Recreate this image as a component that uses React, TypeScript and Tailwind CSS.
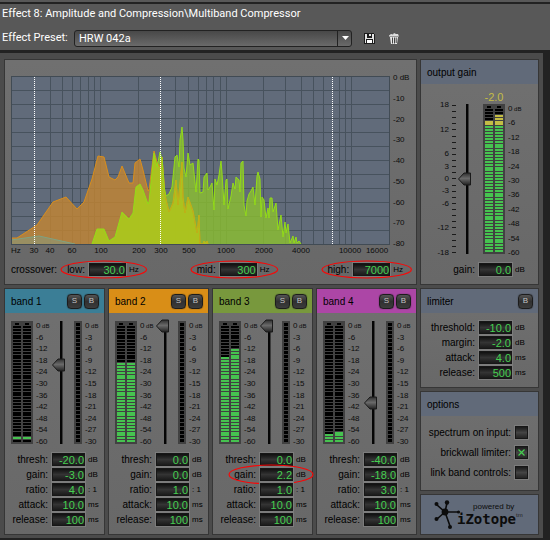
import { useId, useState } from "react";

type Band = {
  name: string;
  header: string;
  left: number;
  right: number;
  skip: number;
  thresh: string;
  gain: string;
  ratio: string;
  attack: string;
  release: string;
  marked?: boolean;
};

const bands: Band[] = [
  { name: "band 1", header: "bg-[#3b7e96]", left: 1, right: 1, skip: 1, thresh: "-20.0", gain: "-3.0", ratio: "4.0", attack: "10.0", release: "100" },
  { name: "band 2", header: "bg-[#d98e17]", left: 28, right: 28, skip: 0, thresh: "0.0", gain: "0.0", ratio: "1.0", attack: "10.0", release: "100" },
  { name: "band 3", header: "bg-[#78983d]", left: 30, right: 33, skip: 0, thresh: "0.0", gain: "2.2", ratio: "1.0", attack: "10.0", release: "100", marked: true },
  { name: "band 4", header: "bg-[#ac46a6]", left: 3, right: 4, skip: 0, thresh: "-40.0", gain: "-18.0", ratio: "3.0", attack: "10.0", release: "100" },
];

const levelScale = ["0", "-6", "-12", "-18", "-24", "-30", "-36", "-42", "-48", "-54", "-60"];
const reductionScale = ["0", "-3", "-6", "-9", "-12", "-15", "-18", "-21", "-24", "-27", "-30"];
const gainScale = ["18", "", "12", "", "6", "3", "0", "-3", "-6", "", "-12", "", "-18"];
const dbScale = ["0 dB", "-10", "-20", "-30", "-40", "-50", "-60", "-70", "-80"];

const gridX = [39, 51, 61, 69, 77, 83, 89, 127, 164, 177, 187, 195, 202, 209, 215, 252, 274, 290, 302, 312, 328, 334, 340];
const gridY = [14, 28, 42, 56, 70, 84, 98, 112, 126, 140, 154];
const crossovers = [23, 149, 321];

const freqLabels: [number, string][] = [
  [23, "30"], [39, "40"], [61, "60"], [90, "100"], [128, "200"], [150, "300"], [178, "500"],
  [215, "1000"], [253, "2000"], [290, "4000"], [339, "10000"], [366, "16000"],
];

const lowLine = "0,164 28,160 64,168";

const midLowLine =
  "0,162 6,162 26,149 42,126 55,121 66,133 73,126 81,103 87,80 93,81 98,101 104,104 107,101 111,90 118,107 122,107 " +
  "124,87 129,83 132,94 137,115 138,114 143,75 146,86 149,91 151,81 154,119 158,136 162,127 165,104 167,129 171,86 " +
  "172,121 174,137 177,121 182,135 186,157 188,139 189,168 192,168 193,165 195,167 196,165 197,168";

const midHighLine =
  "81,168 86,153 93,153 98,165 104,161 111,136 118,143 122,137 125,111 129,108 132,114 137,128 138,126 143,77 146,91 " +
  "149,76 151,84 153,111 155,120 158,118 161,111 164,81 166,79 168,91 169,64 171,51 172,64 173,92 175,101 177,77 " +
  "179,89 182,87 185,116 187,83 188,84 189,117 192,116 193,101 196,97 197,114 199,111 201,107 203,134 204,103 " +
  "206,109 208,99 210,85 211,97 213,129 215,104 216,103 217,133 220,120 222,107 224,113 225,101 228,104 229,116 " +
  "230,87 232,85 233,129 235,140 236,125 238,118 240,115 242,111 244,129 246,100 247,96 249,103 250,141 251,121 " +
  "253,124 255,142 257,132 258,142 259,122 261,122 262,136 265,127 267,154 270,139 272,161 274,146 275,157 277,148 " +
  "279,167 282,160 283,167 285,161 286,167 288,165 290,168";

function Header({ title, color, buttons = [] }: { title: string; color: string; buttons?: string[] }) {
  return (
    <div className={`flex h-6 items-center gap-0.5 pl-1.5 pr-[5px] ${color}`}>
      <h2 className="flex-1 text-[10px]">{title}</h2>
      {buttons.map((label) => (
        <button
          key={label}
          className="flex size-[15px] items-center justify-center rounded-[4px] border border-[#1c1c1c] bg-linear-to-b from-[#555] via-[#303030] to-[#3c3c3c] text-[8px] text-[#c4c4c4] shadow-[0_0_1px_#222]"
        >
          {label}
        </button>
      ))}
    </div>
  );
}

function Panel({ children, className = "" }: { children: React.ReactNode; className?: string }) {
  return (
    <section className={`border border-[#363636] bg-linear-to-b from-[#707070] to-[#686868] ${className}`}>
      {children}
    </section>
  );
}

function Ellipse() {
  return (
    <svg className="pointer-events-none absolute inset-0 size-full overflow-visible">
      <ellipse cx="50%" cy="50%" rx="50%" ry="50%" fill="none" stroke="#f80808" strokeWidth="1.2" />
    </svg>
  );
}

function ValueBox({ id, initial }: { id: string; initial: string }) {
  const [value, setValue] = useState(initial);

  return (
    <input
      id={id}
      value={value}
      onChange={(e) => setValue(e.target.value)}
      className="h-[13px] w-full min-w-0 border border-[#161616] bg-linear-to-b from-[#101010] via-[#343434] to-[#1a1a1a] text-right text-[11px] leading-[11px] text-[#45cf50] shadow-[0_0_0_1px_#7c7c7c]"
    />
  );
}

function Field({ label, value, unit, wide = false, marked = false }: { label: string; value: string; unit: string; wide?: boolean; marked?: boolean }) {
  const id = useId();

  return (
    <div className={`relative grid h-[13px] items-center ${wide ? "grid-cols-[1fr_33px_26px]" : "grid-cols-[1fr_33px_19px]"}`}>
      <label htmlFor={id} className="pr-1 text-right text-[10px] leading-3">{label}</label>
      <ValueBox id={id} initial={value} />
      <span className="pl-[3px] text-[8px]">{unit}</span>
      {marked && (
        <div className="absolute -inset-y-[3px] left-4 -right-px">
          <Ellipse />
        </div>
      )}
    </div>
  );
}

function Scale({ labels, className = "" }: { labels: string[]; className?: string }) {
  return (
    <div className={`flex flex-col justify-between text-[8px] leading-[11px] text-[#0c0c0c] ${className}`}>
      {labels.map((label, i) => (
        <span key={i} className="h-[11px] whitespace-nowrap">
          {label}
          {i === 0 && label === "0" && <span className="text-[6px]"> dB</span>}
        </span>
      ))}
    </div>
  );
}

function Meter({ height, count, levels, skip = 0, hot = [0, 0] }: { height: number; count: number; levels: number[]; skip?: number; hot?: number[] }) {
  const pitch = (height - 6) / count;

  function colorOf(channel: number, fromBottom: number) {
    if (fromBottom < skip) return "#000";
    if (fromBottom < levels[channel] + skip) return "#46c350";
    if (fromBottom < levels[channel] + hot[channel]) return "#c4bd45";
    return "#000";
  }

  return (
    <svg width="22" height={height} className="bg-[#414141]" shapeRendering="crispEdges">
      {[2, 12].map((x, channel) => (
        <g key={x}>
          <rect x={x + 2} y="2" width="4" height="2" fill="#000" />
          {Array.from({ length: count }, (_, i) => (
            <rect key={i} x={x} y={Math.round(height - 2 - (i + 1) * pitch) + 1} width="8" height="2" fill={colorOf(channel, i)} />
          ))}
        </g>
      ))}
    </svg>
  );
}

function ReductionMeter() {
  return (
    <svg width="8" height="123" className="mt-px bg-[#414141]" shapeRendering="crispEdges">
      {Array.from({ length: 30 }, (_, i) => (
        <rect key={i} x="2" y={2 + i * 4} width="4" height="3" fill="#000" />
      ))}
    </svg>
  );
}

function Slider({ label, initial, min, max, height, inset }: { label: string; initial: number; min: number; max: number; height: number; inset: number }) {
  const [value, setValue] = useState(initial);
  const id = useId();
  const y = Math.round(inset + ((max - value) / (max - min)) * (height - inset - 2));

  return (
    <div className="relative">
      <svg width="13" height={height} className="overflow-visible">
        <defs>
          <linearGradient id={id} x1="0" y1="0" x2="0" y2="1">
            <stop offset="0" stopColor="#2e2e2e" />
            <stop offset="0.45" stopColor="#6a6a6a" />
            <stop offset="1" stopColor="#222" />
          </linearGradient>
        </defs>
        <rect x="8" y="0" width="3" height={height} fill="#3c3c3c" />
        <rect x="8" y="0" width="2" height={height} fill="#050505" />
        <path d={`M0.5 ${y} L6 ${y - 6} H12.5 V${y + 6} H6 Z`} fill={`url(#${id})`} stroke="#1a1a1a" />
      </svg>
      <input
        type="range"
        aria-label={label}
        min={min}
        max={max}
        value={value}
        onChange={(e) => setValue(Number(e.target.value))}
        className="absolute inset-0 size-full opacity-0 [direction:rtl] [writing-mode:vertical-lr]"
      />
    </div>
  );
}

function Spectrum() {
  return (
    <svg viewBox="0 0 379 182" className="mt-1 block w-full">
      <defs>
        <clipPath id="mid-low-area">
          <polygon points={`0,168 ${midLowLine}`} />
        </clipPath>
        <clipPath id="right-side">
          <rect x="150" y="0" width="229" height="168" />
        </clipPath>
      </defs>
      <rect x="0" y="0" width="379" height="169" fill="#616b7a" />
      <g stroke="#47525d" shapeRendering="crispEdges">
        {gridX.map((x) => (
          <line key={x} x1={x + 0.5} x2={x + 0.5} y1="0" y2="168" />
        ))}
        {gridY.map((y) => (
          <line key={y} x1="0" x2="379" y1={y + 0.5} y2={y + 0.5} />
        ))}
      </g>
      <g fillOpacity="0.8">
        <polygon points={`0,168 ${midLowLine}`} fill="#c48632" />
        <polygon points={`${lowLine} 0,168`} fill="#94926a" />
        <polygon points={midHighLine} fill="#8cc030" />
        <polygon points={midHighLine} fill="#b2c51a" clipPath="url(#mid-low-area)" />
      </g>
      <g fill="none">
        <polyline points={lowLine} stroke="#7fa282" />
        <polyline points={midLowLine} stroke="#d98e1c" />
        <polyline points={midLowLine} stroke="#b9b818" clipPath="url(#right-side)" />
        <polyline points={midHighLine} stroke="#93dc17" />
      </g>
      <g stroke="#fff" strokeDasharray="1 1" shapeRendering="crispEdges">
        {crossovers.map((x) => (
          <line key={x} x1={x + 0.5} x2={x + 0.5} y1="1" y2="168" />
        ))}
      </g>
      <rect x="0.5" y="0.5" width="378" height="168" fill="none" stroke="#414b54" />
      <g fontSize="8" fill="#0c0c0c">
        <text x="0" y="177">Hz</text>
        {freqLabels.map(([x, label]) => (
          <text key={label} x={x} y="177" textAnchor="middle">{label}</text>
        ))}
      </g>
    </svg>
  );
}

function Crossover({ label, value }: { label: string; value: string }) {
  const id = useId();

  return (
    <div className="relative flex h-[13px] items-center pl-1.5 pr-2">
      <label htmlFor={id} className="mr-1 text-[10px] leading-3">{label}</label>
      <div className="flex w-[37px]">
        <ValueBox id={id} initial={value} />
      </div>
      <span className="ml-[3px] text-[8px]">Hz</span>
      <div className="absolute inset-x-0 -inset-y-0.5">
        <Ellipse />
      </div>
    </div>
  );
}

function BandPanel({ band }: { band: Band }) {
  return (
    <Panel className="pb-2">
      <Header title={band.name} color={band.header} buttons={["S", "B"]} />
      <div className="mt-[7px] flex h-[127px] items-start pl-1.5">
        <div className="mt-px flex">
          <Meter height={123} count={41} levels={[band.left, band.right]} skip={band.skip} />
        </div>
        <Scale labels={levelScale} className="ml-[3px] h-full w-4" />
        <div className="mt-px">
          <Slider label={`${band.name} threshold`} initial={Number(band.thresh)} min={-60} max={0} height={123} inset={5} />
        </div>
        <div className="ml-[9px] flex">
          <ReductionMeter />
        </div>
        <Scale labels={reductionScale} className="ml-[3px] h-full" />
      </div>
      <div className="mt-1.5 flex flex-col gap-0.5">
        <Field label="thresh:" value={band.thresh} unit="dB" />
        <Field label="gain:" value={band.gain} unit="dB" marked={band.marked} />
        <Field label="ratio:" value={band.ratio} unit=": 1" />
        <Field label="attack:" value={band.attack} unit="ms" />
        <Field label="release:" value={band.release} unit="ms" />
      </div>
    </Panel>
  );
}

function OutputGain() {
  return (
    <Panel className="pb-2">
      <Header title="output gain" color="bg-[#616a79]" />
      <div className="mt-1.5 flex items-start pl-3">
        <Scale labels={gainScale} className="mt-[9px] h-[159px] w-4 text-right" />
        <svg width="4" height="150" className="ml-[3px] mt-3.5" shapeRendering="crispEdges">
          {Array.from({ length: 25 }, (_, i) => (
            <rect key={i} x="0" y={Math.round(i * 6.12) + 1} width="4" height="1" fill="#1a1a1a" />
          ))}
        </svg>
        <div className="ml-0.5 mt-3.5">
          <Slider label="output gain" initial={0} min={-18} max={18} height={150} inset={1} />
        </div>
        <div className="ml-3 flex flex-col items-center">
          <output className="text-[11px] leading-[14px] text-[#c4bd45]">-2.0</output>
          <Meter height={150} count={50} levels={[44, 44]} hot={[2, 4]} />
        </div>
        <Scale labels={levelScale} className="ml-[3px] mt-[13px] h-[155px]" />
      </div>
      <div className="mt-[5px]">
        <Field label="gain:" value="0.0" unit="dB" wide />
      </div>
    </Panel>
  );
}

function Option({ label, initial = false }: { label: string; initial?: boolean }) {
  const [checked, setChecked] = useState(initial);

  return (
    <label className="flex h-[13px] items-center justify-end gap-1 text-[10px] leading-3">
      {label}
      <span className="relative flex">
        <input
          type="checkbox"
          checked={checked}
          onChange={(e) => setChecked(e.target.checked)}
          className="size-[13px] appearance-none border border-[#161616] bg-linear-to-b from-[#1a1a1a] via-[#444] to-[#242424] shadow-[0_0_0_1px_#7c7c7c]"
        />
        {checked && (
          <svg viewBox="0 0 13 13" className="pointer-events-none absolute inset-0">
            <path d="M3.5 3.5 L9.5 9.5 M9.5 3.5 L3.5 9.5" stroke="#45cf50" strokeWidth="1.2" />
          </svg>
        )}
      </span>
    </label>
  );
}

function Logo() {
  return (
    <section className="flex h-[41px] items-center border border-[#363636] bg-[#616a79] pl-3">
      <svg width="28" height="31" viewBox="0 0 28 31" stroke="#0c0c0c" strokeWidth="1.6" fill="#0c0c0c">
        <path d="M12 13 L14 4 M12 13 L4 6 M12 13 L4 20 M12 13 L17 27 M12 13 L26 13" fill="none" />
        <g stroke="none">
          <circle cx="12" cy="13" r="3.4" />
          <circle cx="14" cy="3.5" r="2.2" />
          <circle cx="3.5" cy="5" r="2" />
          <circle cx="3.5" cy="20" r="2" />
          <circle cx="17" cy="28" r="2" />
          <circle cx="25.5" cy="13" r="1.6" />
        </g>
      </svg>
      <div className="-ml-1 flex items-center">
        <div>
          <p className="pl-4 text-[8px] leading-[9px] text-[#0c0c0c]">powered by</p>
          <p className="font-['DejaVu_Sans_Mono',monospace] text-[14px] font-bold leading-[17px] text-[#0c0c0c]">iZotope</p>
        </div>
        <span className="text-[6px] leading-[6px] text-[#222]">tm</span>
      </div>
    </section>
  );
}

function TitleBar() {
  return (
    <header className="border-b-[3px] border-[#222] bg-[#585858] pb-0.5 font-['Roboto',sans-serif] text-[11px] text-white">
      <div className="h-1 border-b-2 border-[#222]" />
      <h1 className="pl-0.5 leading-5">Effect 8: Amplitude and Compression\Multiband Compressor</h1>
      <div className="mt-1 flex h-5 items-center pl-0.5">
        <label htmlFor="preset" className="w-[72px] shrink-0 whitespace-nowrap">Effect Preset:</label>
        <div className="relative flex w-[278px]">
          <select
            id="preset"
            className="h-[17px] w-full appearance-none rounded-[3px] border border-[#222] bg-linear-to-b from-[#484848] to-[#6a6a6a] pl-1 leading-[15px]"
          >
            <option>HRW 042a</option>
          </select>
          <span className="pointer-events-none absolute inset-y-0 right-0 flex w-[15px] items-center justify-center border-l border-[#222]">
            <svg width="7" height="4" viewBox="0 0 7 4">
              <path d="M0 0 H7 L3.5 4 Z" fill="#fff" />
            </svg>
          </span>
        </div>
        <button aria-label="Save preset" className="ml-3">
          <svg width="11" height="11" viewBox="0 0 11 11" shapeRendering="crispEdges">
            <path d="M0 0 H9 L11 2 V11 H0 Z" fill="#1c1c1c" />
            <path d="M1 1 H3 V5 H8 V1 H9 L10 2 V10 H9 V6 H2 V10 H1 Z" fill="#e4e4e4" />
            <rect x="5" y="1" width="2" height="2" fill="#e4e4e4" />
            <rect x="3" y="7" width="5" height="3" fill="#fff" />
          </svg>
        </button>
        <button aria-label="Delete preset" className="ml-3.5">
          <svg width="10" height="11" viewBox="0 0 10 11">
            <path d="M0 2.5 L2 1 L4 1.5 L5 0 L7 1 L9 1 L10 3.5 H0 Z" fill="#ddd" />
            <path d="M1 4 H9 L8 11 H2 Z" fill="#e8e8e8" />
            <path d="M3.5 4.5 V10.5 M5.5 4.5 V10.5 M7.2 4.5 V10" stroke="#444" />
          </svg>
        </button>
      </div>
    </header>
  );
}

export default function App() {
  return (
    <div className="min-h-screen bg-[#222] font-['Liberation_Sans',Arial,sans-serif] text-black">
      <TitleBar />
      <main className="mr-[7px] grid grid-cols-[1fr_119px] gap-[3px] bg-[#4b4b4b] px-1 pb-[3px] pt-1.5">
        <div className="flex flex-col gap-[3px]">
          <Panel className="pb-2">
            <div className="flex pl-1.5 pt-3">
              <div className="min-w-0 flex-1">
                <Spectrum />
              </div>
              <Scale labels={dbScale} className="mb-[9px] ml-[3px] w-[23px]" />
            </div>
            <div className="mt-[5px] flex items-center justify-between pl-1.5 pr-[5px]">
              <div className="flex items-center gap-1">
                <span className="text-[10px] leading-3">crossover:</span>
                <Crossover label="low:" value="30.0" />
              </div>
              <Crossover label="mid:" value="300" />
              <Crossover label="high:" value="7000" />
            </div>
          </Panel>
          <div className="grid grid-cols-4 gap-[3px]">
            {bands.map((band) => (
              <BandPanel key={band.name} band={band} />
            ))}
          </div>
        </div>

        <div className="flex flex-col gap-[3px]">
          <OutputGain />
          <Panel className="pb-2">
            <Header title="limiter" color="bg-[#616a79]" buttons={["B"]} />
            <div className="mt-2 flex flex-col gap-0.5">
              <Field label="threshold:" value="-10.0" unit="dB" wide />
              <Field label="margin:" value="-2.0" unit="dB" wide />
              <Field label="attack:" value="4.0" unit="ms" wide />
              <Field label="release:" value="500" unit="ms" wide />
            </div>
          </Panel>
          <Panel className="pb-[11px]">
            <Header title="options" color="bg-[#616a79]" />
            <div className="mt-2.5 flex flex-col gap-[7px] pr-2.5">
              <Option label="spectrum on input:" />
              <Option label="brickwall limiter:" initial />
              <Option label="link band controls:" />
            </div>
          </Panel>
          <Logo />
        </div>
      </main>
    </div>
  );
}
